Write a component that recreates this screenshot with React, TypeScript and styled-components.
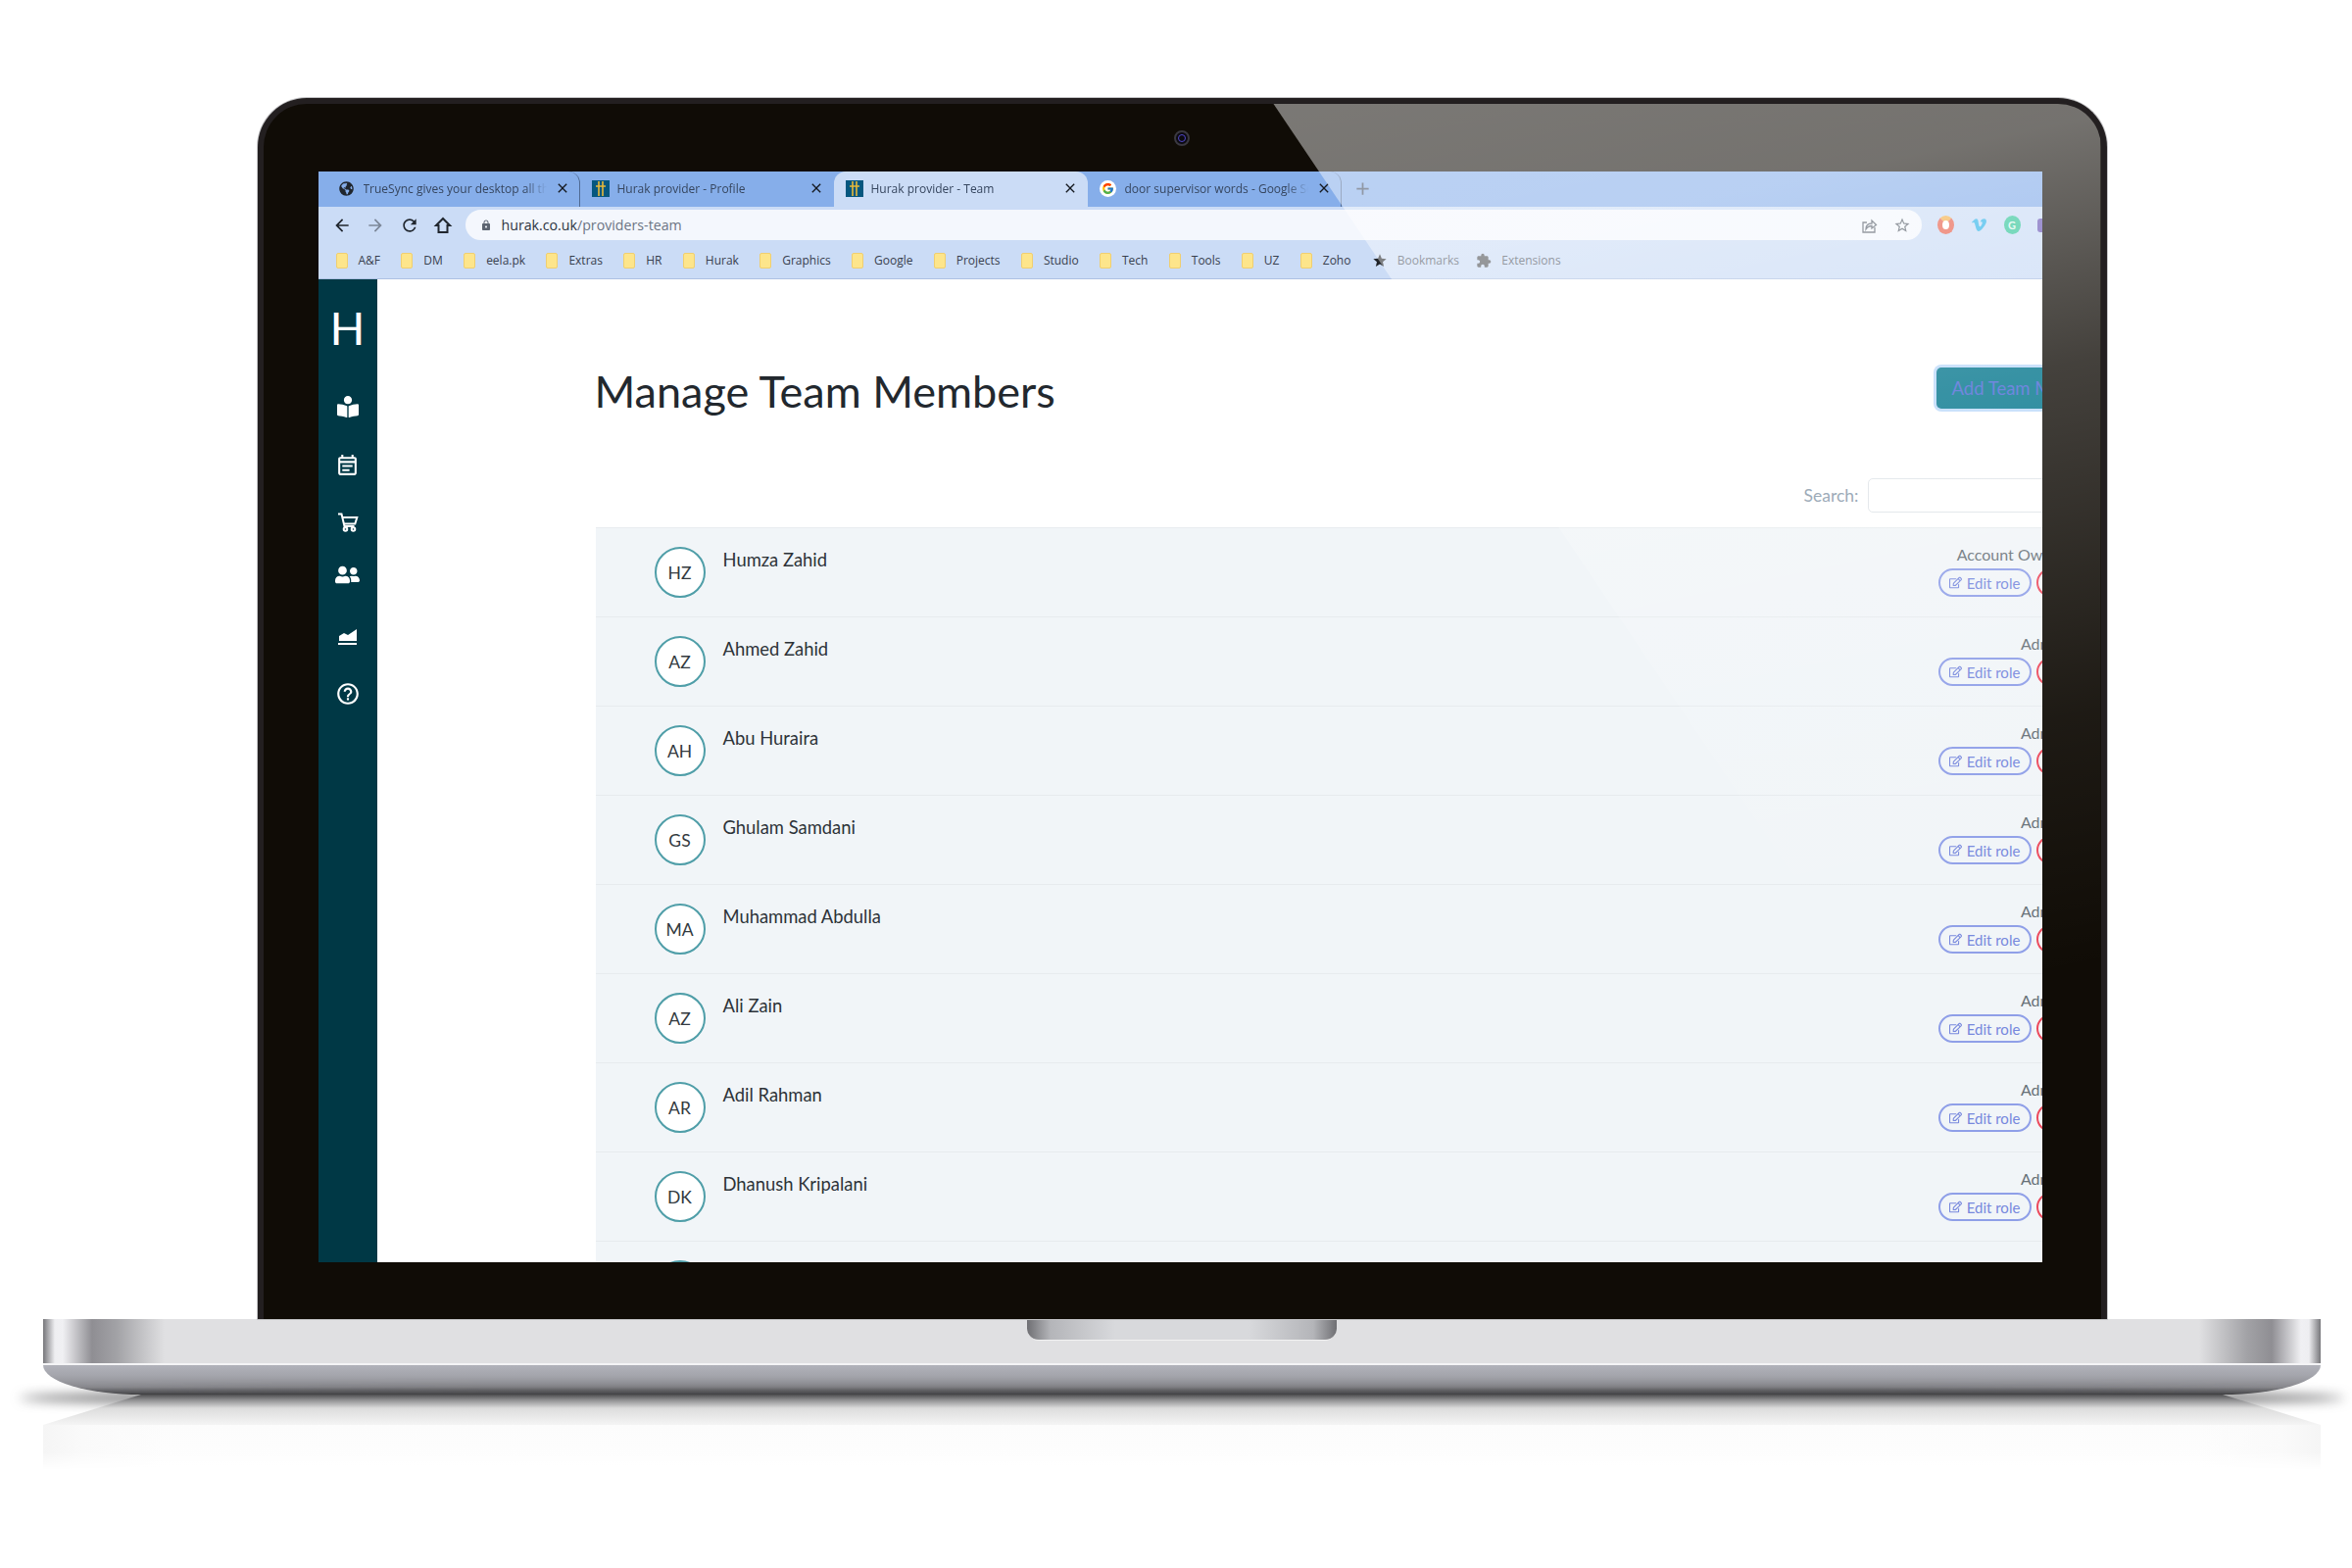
import React from 'react'
import styled, { createGlobalStyle } from 'styled-components'
import { FaBookReader, FaGlobeAmericas, FaRegEdit, FaUserFriends, FaVimeoV } from 'react-icons/fa'
import { FcGoogle } from 'react-icons/fc'
import {
  MdArrowBack,
  MdArrowForward,
  MdClose,
  MdAdd,
  MdExtension,
  MdLock,
  MdOutlineEventNote,
  MdOutlineHelpOutline,
  MdRefresh,
  MdStar,
  MdStarBorder,
} from 'react-icons/md'

const GlobalStyle = createGlobalStyle`
  html, body {
    margin: 0;
    background: #fff;
    font-family: 'Lato', 'Open Sans', sans-serif;
  }
  * { box-sizing: border-box; }
`

const Stage = styled.div`
  width: 2400px;
  height: 1600px;
  padding: 100px 0 0 44px;
  overflow: hidden;
  background: #fff;
`

const Laptop = styled.div`
  width: 2324px;
  display: flex;
  flex-direction: column;
  align-items: center;
`

const Lid = styled.div`
  position: relative;
  width: 1887px;
  height: 1246px;
  background: #100c06;
  border: 6px solid #231f20;
  border-bottom: 0;
  border-radius: 50px 50px 0 0;
  box-shadow: 0 0 0 1px #c4c4c6;
  overflow: hidden;
`

const Glare = styled.div`
  position: absolute;
  inset: 0;
  pointer-events: none;
  clip-path: polygon(1031px 0, 100% 0, 100% 100%, 1866px 100%);
  background: linear-gradient(
    168deg,
    rgba(255, 255, 255, 0.48) 0,
    rgba(255, 255, 255, 0.42) 25%,
    rgba(255, 255, 255, 0.22) 40%,
    rgba(255, 255, 255, 0.06) 62%,
    rgba(255, 255, 255, 0) 78%
  );
`

const TopBezel = styled.div`
  height: 69px;
  display: flex;
  align-items: center;
  justify-content: center;
`

const Camera = styled.div`
  width: 16px;
  height: 16px;
  margin-top: 1px;
  border-radius: 50%;
  background: #0c0a10;
  border: 2px solid #3a3840;
  display: flex;
  align-items: center;
  justify-content: center;
  &::after {
    content: '';
    width: 6px;
    height: 6px;
    border-radius: 50%;
    border: 1px solid #5046c8;
  }
`

const Screen = styled.div`
  margin: 0 60px 0 56px;
  height: 1113px;
  display: flex;
  flex-direction: column;
  overflow: hidden;
  background: #fff;
`

const TabStrip = styled.div`
  height: 36px;
  flex: none;
  display: flex;
  align-items: stretch;
  padding-left: 8px;
  background: #86aeea;
`

const Tab = styled.div<{ $active?: boolean; $divider?: boolean }>`
  width: 259px;
  flex: none;
  display: flex;
  align-items: center;
  gap: 8px;
  padding: 0 9px 2px 12px;
  border-radius: 12px 12px 0 0;
  background: ${p => (p.$active ? '#cbdcf6' : 'transparent')};
  border-right: 1px solid ${p => (p.$divider ? '#4f6a94' : 'transparent')};
  color: #36465f;
  font-family: 'Open Sans', sans-serif;
  font-size: 12px;
`

const TabTitle = styled.span`
  flex: 1;
  min-width: 0;
  white-space: nowrap;
  overflow: hidden;
  mask-image: linear-gradient(90deg, #000 88%, transparent 100%);
`

const IconSlot = styled.span`
  width: 18px;
  flex: none;
  display: flex;
  justify-content: center;
`

const CloseMark = styled.span`
  display: flex;
  font-size: 16px;
  color: #15191f;
`

const Favicon = styled.svg`
  width: 18px;
  height: 17px;
  flex: none;
`

const GoogleBadge = styled.span`
  width: 17px;
  height: 17px;
  flex: none;
  border-radius: 50%;
  background: #fff;
  display: flex;
  align-items: center;
  justify-content: center;
  font-size: 13px;
`

const NewTab = styled.div`
  width: 44px;
  display: flex;
  align-items: center;
  justify-content: center;
  padding-bottom: 2px;
  color: #3d4a60;
  font-size: 21px;
`

const Toolbar = styled.div`
  height: 39px;
  flex: none;
  display: flex;
  align-items: center;
  padding: 0 0 2px 14px;
  background: #cbdcf6;
  color: #20262e;
`

const NavButton = styled.span<{ $muted?: boolean }>`
  width: 34.5px;
  flex: none;
  display: flex;
  align-items: center;
  justify-content: flex-start;
  font-size: 20px;
  color: ${p => (p.$muted ? '#7c8798' : '#20262e')};
`

const Omnibox = styled.div`
  width: 1486px;
  height: 31px;
  margin-left: -2px;
  flex: none;
  display: flex;
  align-items: center;
  padding: 0 3px 0 15px;
  border-radius: 16px;
  background: #f4f7fd;
  font-family: 'Open Sans', sans-serif;
  font-size: 14.2px;
  color: #2c3440;
`

const UrlHost = styled.span`
  margin-left: 10px;
`

const UrlPath = styled.span`
  color: #6c7584;
  flex: 1;
`

const OmniIcon = styled.span`
  width: 34px;
  display: flex;
  justify-content: center;
  color: #59616c;
  font-size: 18px;
`

const Extensions = styled.div`
  display: flex;
  align-items: center;
  flex: none;
  gap: 17px;
  margin-left: 16px;
  font-size: 17px;
`

const RingIcon = styled.span`
  width: 17px;
  height: 19px;
  border-radius: 50%;
  border: 5px solid #e8604c;
  border-top-color: #f4b04a;
  background: #fff;
`

const VimeoIcon = styled.span`
  width: 17px;
  display: flex;
  color: #2fb4ea;
`

const GrammarlyIcon = styled.span`
  width: 17px;
  height: 19px;
  border-radius: 50%;
  background: #35c69b;
  color: #dff7ee;
  display: flex;
  align-items: center;
  justify-content: center;
  font-size: 11px;
  font-weight: 700;
`

const ExtensionSliver = styled.span`
  width: 9px;
  height: 14px;
  border-radius: 3px;
  background: #6d5bb8;
`

const BookmarksBar = styled.div`
  height: 35px;
  flex: none;
  display: flex;
  align-items: center;
  padding: 0 0 3px 18px;
  background: #cbdcf6;
  border-bottom: 1px solid #adc1e2;
  font-family: 'Open Sans', sans-serif;
  font-size: 12px;
  color: #38404e;
`

const Bookmark = styled.div<{ $muted?: boolean }>`
  display: flex;
  align-items: center;
  gap: 11px;
  margin-right: 21.3px;
  white-space: nowrap;
  color: ${p => (p.$muted ? '#4c5462' : 'inherit')};
  &:last-child {
    margin-left: -4px;
  }
`

const Folder = styled.span`
  width: 12px;
  height: 16px;
  flex: none;
  border-radius: 2px;
  background: #fde58b;
  border: 1px solid #f0cf70;
`

const BookmarkGlyph = styled.span<{ $dark?: boolean }>`
  display: flex;
  font-size: 16px;
  margin-right: -1px;
  color: ${p => (p.$dark ? '#1f2328' : '#4c4f54')};
`

const Page = styled.div`
  flex: 1;
  min-height: 0;
  display: flex;
`

const Sidebar = styled.nav`
  width: 60px;
  flex: none;
  display: flex;
  flex-direction: column;
  align-items: center;
  background: #003845;
  color: #fff;
`

const Logo = styled.div`
  height: 100px;
  padding-top: 26px;
  font-family: 'Lato', sans-serif;
  font-size: 47px;
  line-height: 47px;
  font-weight: 400;
`

const NavIcon = styled.div<{ $h: number }>`
  height: ${p => p.$h}px;
  display: flex;
  align-items: center;
  font-size: 22px;
`

const Main = styled.main`
  flex: 1;
  min-width: 0;
  overflow: hidden;
  padding: 90px 0 0 223px;
`

const Content = styled.div`
  width: 1640px;
`

const HeaderRow = styled.div`
  height: 42px;
  display: flex;
  align-items: center;
  justify-content: space-between;
  padding-right: 48px;
`

const Title = styled.h1`
  margin: 6px 0 0 -1px;
  font-size: 45px;
  line-height: 42px;
  font-weight: 400;
  color: #22282e;
`

const AddButton = styled.button`
  width: 224px;
  height: 42px;
  padding: 0 0 0 16px;
  text-align: left;
  border: 0;
  border-radius: 5px;
  background: #00748b;
  box-shadow: 0 0 0 3px #bcd9fa;
  color: #4a66d4;
  font-family: inherit;
  font-size: 18.5px;
`

const SearchRow = styled.div`
  margin-top: 71px;
  padding-right: 42px;
  display: flex;
  justify-content: flex-end;
  align-items: center;
  gap: 9px;
  color: #8798a9;
  font-size: 17.5px;
`

const SearchInput = styled.div`
  width: 300px;
  height: 35px;
  border-radius: 5px;
  background: #fff;
  border: 1px solid #dfe4e8;
`

const MemberList = styled.div`
  margin-top: 15px;
  background: #f1f5f8;
  border-top: 1px solid #e8ecef;
`

const MemberRow = styled.div`
  height: 91px;
  display: flex;
  padding: 19px 60px 0 60px;
  border-bottom: 1.5px solid #e7ebee;
`

const Avatar = styled.div`
  width: 52px;
  height: 52px;
  flex: none;
  display: flex;
  align-items: center;
  justify-content: center;
  border-radius: 50%;
  background: #fff;
  border: 2px solid #4f9ea8;
  color: #333a40;
  font-size: 17.5px;
`

const MemberName = styled.div`
  margin: 1px 0 0 18px;
  flex: 1;
  font-size: 18.4px;
  line-height: 24px;
  color: #2d3338;
`

const MemberSide = styled.div`
  width: 210px;
  margin-top: -3px;
  flex: none;
  display: flex;
  flex-direction: column;
`

const Role = styled.div`
  height: 25px;
  padding: 1px 80px 0 0;
  text-align: right;
  font-size: 16px;
  line-height: 20px;
  white-space: nowrap;
  color: #677077;
`

const PillRow = styled.div`
  display: flex;
  gap: 5px;
`

const Pill = styled.div<{ $danger?: boolean }>`
  width: ${p => (p.$danger ? 110 : 95)}px;
  height: 29px;
  display: flex;
  align-items: center;
  justify-content: center;
  gap: 5px;
  border-radius: 15px;
  border: 2px solid ${p => (p.$danger ? '#ec4a5c' : '#8f9fe8')};
  color: ${p => (p.$danger ? '#ec4a5c' : '#7788dd')};
  font-size: 15px;
  white-space: nowrap;
`

const Base = styled.div`
  width: 100%;
  display: flex;
  flex-direction: column;
`

const Deck = styled.div`
  height: 47px;
  display: flex;
  justify-content: center;
  border-bottom: 2px solid #f4f4f6;
  background: linear-gradient(
    90deg,
    #77777b 0,
    #eeeef1 12px,
    #f0f0f3 20px,
    #8f8e93 50px,
    #a2a2a6 75px,
    #e0e0e2 124px,
    #e0e0e2 calc(100% - 124px),
    #a2a2a6 calc(100% - 75px),
    #8f8e93 calc(100% - 50px),
    #f0f0f3 calc(100% - 20px),
    #eeeef1 calc(100% - 12px),
    #77777b 100%
  );
`

const Notch = styled.div`
  width: 316px;
  height: 22px;
  border-radius: 0 0 12px 12px;
  border-bottom: 1px solid #f2f2f2;
  background: linear-gradient(
    90deg,
    #6f6f73 0,
    #b4b5b9 24px,
    #d8d9dc 90px,
    #d8d9dc calc(100% - 90px),
    #b4b5b9 calc(100% - 24px),
    #6f6f73 100%
  );
`

const Lip = styled.div`
  height: 30px;
  border-radius: 0 0 100px 100px / 0 0 30px 30px;
  background: linear-gradient(180deg, #b1b2ba 0, #a4a5ac 35%, #8c8c91 75%, #5a5a5e 94%, #323234 100%);
`

const GroundShadow = styled.div`
  position: relative;
  height: 31px;
  &::before {
    content: '';
    position: absolute;
    left: -24px;
    right: -24px;
    top: -3px;
    height: 13px;
    border-radius: 50%/100%;
    background: #4a4a4c;
    filter: blur(6px);
  }
  &::after {
    content: '';
    position: absolute;
    inset: 0;
    clip-path: polygon(100px 0, calc(100% - 100px) 0, 100% 100%, 0 100%);
    background: linear-gradient(180deg, #4e4e50 0, #8f8f91 18%, #dcdcdc 45%, #f5f5f5 100%);
  }
`

const Reflection = styled.div`
  height: 46px;
  background:
    linear-gradient(90deg, #f5f5f5 0, #fafafa 40px, rgba(255, 255, 255, 0) 124px, rgba(255, 255, 255, 0) calc(100% - 124px), #fafafa calc(100% - 40px), #f5f5f5 100%),
    linear-gradient(180deg, #fcfcfc 0, #fefefe 100%);
  mask-image: linear-gradient(180deg, #000 0, #000 60%, transparent 100%);
`

const HurakIcon = () => (
  <Favicon viewBox='0 0 18 17'>
    <rect width='18' height='17' fill='#05577f' />
    <path d='M7 1v15M11 1v15M4 6h10' stroke='#e8b93a' strokeWidth='1.6' fill='none' />
  </Favicon>
)

const ShareIcon = () => (
  <svg width='18' height='18' viewBox='0 0 18 18' fill='none' stroke='currentColor' strokeWidth='1.3'>
    <path d='M15 11v5H3V6h4' />
    <path d='M6 13c0-4 2.500-6 6-6V4l4.500 4.500L12 12V9.500c-2.500 0-4.500 1-6 3.500z' />
  </svg>
)

const HomeIcon = () => (
  <svg width='20' height='20' viewBox='0 0 20 20' fill='none' stroke='currentColor' strokeWidth='2'>
    <path d='M10 3 3 10h2.500v7h9v-7H17z' />
  </svg>
)

const CartIcon = () => (
  <svg width='22' height='20' viewBox='0 0 22 20' fill='none' stroke='currentColor' strokeWidth='2'>
    <path d='M1 1.500h3.500L7.500 14h10' />
    <path d='M5.300 5h15l-2 6.500H7' />
    <circle cx='8.500' cy='17' r='1.800' />
    <circle cx='16.500' cy='17' r='1.800' />
  </svg>
)

const AreaIcon = () => (
  <svg width='22' height='22' viewBox='0 0 22 22' fill='currentColor'>
    <path d='M2 16v-5l5-3 4 2 9-6v12z' />
    <rect x='1' y='18' width='19' height='2' />
  </svg>
)

const bookmarks = ['A&F', 'DM', 'eela.pk', 'Extras', 'HR', 'Hurak', 'Graphics', 'Google', 'Projects', 'Studio', 'Tech', 'Tools', 'UZ', 'Zoho']

const members = [
  { initials: 'HZ', name: 'Humza Zahid', role: 'Account Owner' },
  { initials: 'AZ', name: 'Ahmed Zahid', role: 'Admin' },
  { initials: 'AH', name: 'Abu Huraira', role: 'Admin' },
  { initials: 'GS', name: 'Ghulam Samdani', role: 'Admin' },
  { initials: 'MA', name: 'Muhammad Abdulla', role: 'Admin' },
  { initials: 'AZ', name: 'Ali Zain', role: 'Admin' },
  { initials: 'AR', name: 'Adil Rahman', role: 'Admin' },
  { initials: 'DK', name: 'Dhanush Kripalani', role: 'Admin' },
]

const App = () => {
  return (
    <Stage>
      <GlobalStyle />
      <Laptop>
        <Lid>
          <TopBezel>
            <Camera />
          </TopBezel>
          <Screen>
            <TabStrip>
              <Tab $divider>
                <IconSlot>
                  <FaGlobeAmericas size={15} color='#20262e' />
                </IconSlot>
                <TabTitle>TrueSync gives your desktop all the</TabTitle>
                <CloseMark>
                  <MdClose />
                </CloseMark>
              </Tab>
              <Tab>
                <IconSlot>
                  <HurakIcon />
                </IconSlot>
                <TabTitle>Hurak provider - Profile</TabTitle>
                <CloseMark>
                  <MdClose />
                </CloseMark>
              </Tab>
              <Tab $active>
                <IconSlot>
                  <HurakIcon />
                </IconSlot>
                <TabTitle>Hurak provider - Team</TabTitle>
                <CloseMark>
                  <MdClose />
                </CloseMark>
              </Tab>
              <Tab $divider>
                <IconSlot>
                  <GoogleBadge>
                    <FcGoogle />
                  </GoogleBadge>
                </IconSlot>
                <TabTitle>door supervisor words - Google Search</TabTitle>
                <CloseMark>
                  <MdClose />
                </CloseMark>
              </Tab>
              <NewTab>
                <MdAdd />
              </NewTab>
            </TabStrip>
            <Toolbar>
              <NavButton>
                <MdArrowBack />
              </NavButton>
              <NavButton $muted>
                <MdArrowForward />
              </NavButton>
              <NavButton>
                <MdRefresh />
              </NavButton>
              <NavButton>
                <HomeIcon />
              </NavButton>
              <Omnibox>
                <MdLock size={12} color='#5c6470' />
                <UrlHost>hurak.co.uk</UrlHost>
                <UrlPath>/providers-team</UrlPath>
                <OmniIcon>
                  <ShareIcon />
                </OmniIcon>
                <OmniIcon>
                  <MdStarBorder />
                </OmniIcon>
              </Omnibox>
              <Extensions>
                <RingIcon />
                <VimeoIcon>
                  <FaVimeoV />
                </VimeoIcon>
                <GrammarlyIcon>G</GrammarlyIcon>
                <ExtensionSliver />
              </Extensions>
            </Toolbar>
            <BookmarksBar>
              {bookmarks.map(b => (
                <Bookmark key={b}>
                  <Folder />
                  {b}
                </Bookmark>
              ))}
              <Bookmark $muted>
                <BookmarkGlyph $dark>
                  <MdStar />
                </BookmarkGlyph>
                Bookmarks
              </Bookmark>
              <Bookmark $muted>
                <BookmarkGlyph>
                  <MdExtension />
                </BookmarkGlyph>
                Extensions
              </Bookmark>
            </BookmarksBar>
            <Page>
              <Sidebar>
                <Logo>H</Logo>
                <NavIcon $h={60}>
                  <FaBookReader />
                </NavIcon>
                <NavIcon $h={60}>
                  <MdOutlineEventNote size={25} />
                </NavIcon>
                <NavIcon $h={56}>
                  <CartIcon />
                </NavIcon>
                <NavIcon $h={50}>
                  <FaUserFriends size={25} />
                </NavIcon>
                <NavIcon $h={76}>
                  <AreaIcon />
                </NavIcon>
                <NavIcon $h={42}>
                  <MdOutlineHelpOutline size={26} />
                </NavIcon>
              </Sidebar>
              <Main>
                <Content>
                  <HeaderRow>
                    <Title>Manage Team Members</Title>
                    <AddButton>Add Team Member</AddButton>
                  </HeaderRow>
                  <SearchRow>
                    Search:
                    <SearchInput />
                  </SearchRow>
                  <MemberList>
                    {members.map(m => (
                      <MemberRow key={m.name}>
                        <Avatar>{m.initials}</Avatar>
                        <MemberName>{m.name}</MemberName>
                        <MemberSide>
                          <Role>{m.role}</Role>
                          <PillRow>
                            <Pill>
                              <FaRegEdit size={13} />
                              Edit role
                            </Pill>
                            <Pill $danger>Remove</Pill>
                          </PillRow>
                        </MemberSide>
                      </MemberRow>
                    ))}
                    <MemberRow>
                      <Avatar />
                    </MemberRow>
                  </MemberList>
                </Content>
              </Main>
            </Page>
          </Screen>
          <Glare />
        </Lid>
        <Base>
          <Deck>
            <Notch />
          </Deck>
          <Lip />
          <GroundShadow />
          <Reflection />
        </Base>
      </Laptop>
    </Stage>
  )
}

export default App
